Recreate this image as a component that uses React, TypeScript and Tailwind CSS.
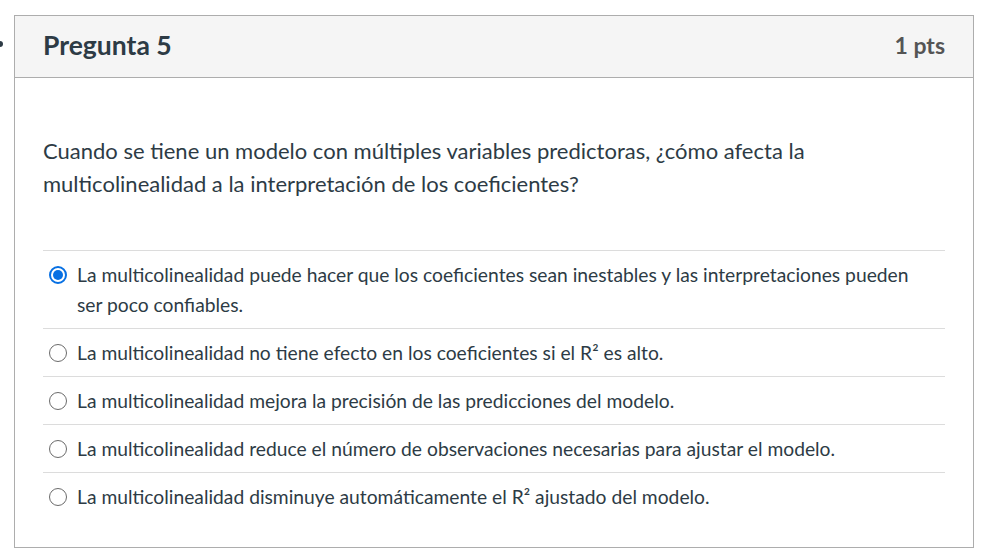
import React from "react";

interface Option {
    id: number;
    content: string;
    selected?: boolean;
}

const options: Option[] = [
    {
        id: 1,
        selected: true,
        content:
            "La multicolinealidad puede hacer que los coeficientes sean inestables y las interpretaciones pueden ser poco confiables.",
    },
    { id: 2, content: "La multicolinealidad no tiene efecto en los coeficientes si el R² es alto." },
    { id: 3, content: "La multicolinealidad mejora la precisión de las predicciones del modelo." },
    {
        id: 4,
        content: "La multicolinealidad reduce el número de observaciones necesarias para ajustar el modelo.",
    },
    { id: 5, content: "La multicolinealidad disminuye automáticamente el R² ajustado del modelo." },
];

const Radio: React.FC<{ checked?: boolean }> = ({ checked }) =>
    checked ? (
        <span className="mt-[6px] flex h-[18px] w-[18px] shrink-0 items-center justify-center rounded-full border-2 border-[#0770e3] bg-white">
            <span className="h-[10px] w-[10px] rounded-full bg-[#0770e3]" />
        </span>
    ) : (
        <span className="mt-[6px] h-[18px] w-[18px] shrink-0 rounded-full border border-[#6b6b6b] bg-white" />
    );

export default function App() {
    return (
        <div className="relative min-h-[560px] bg-white pl-[14px] pt-[15px] font-['Lato','Liberation_Sans',sans-serif] text-[#2d3b45]">
            <span className="absolute left-[-3px] top-[41px] h-[6px] w-[6px] rounded-full bg-[#2d3b45]" />
            <div className="w-[960px] border border-[#adadad] bg-white">
                <div className="flex h-[62px] items-center justify-between border-b border-[#adadad] bg-[#f5f5f5] px-[28px] pb-[3px]">
                    <h2 className="text-[26.5px] font-bold leading-none">Pregunta 5</h2>
                    <span className="text-[23px] font-bold leading-none text-[#555555]">1 pts</span>
                </div>
                <div className="px-[28px] pb-[27px] pt-[56px]">
                    <p className="text-[22px] leading-[33px]">
                        Cuando se tiene un modelo con múltiples variables predictoras, ¿cómo afecta la
                        <br />
                        multicolinealidad a la interpretación de los coeficientes?
                    </p>
                    <div className="mt-[50px]">
                        {options.map((o) => (
                            <label
                                key={o.id}
                                className="flex gap-[10px] border-t border-[#dcdcdc] pb-[8px] pl-[6px] pr-[20px] pt-[9px] text-[19.25px] leading-[30px]"
                            >
                                <Radio checked={o.selected} />
                                <span>{o.content}</span>
                            </label>
                        ))}
                    </div>
                </div>
            </div>
        </div>
    );
}
